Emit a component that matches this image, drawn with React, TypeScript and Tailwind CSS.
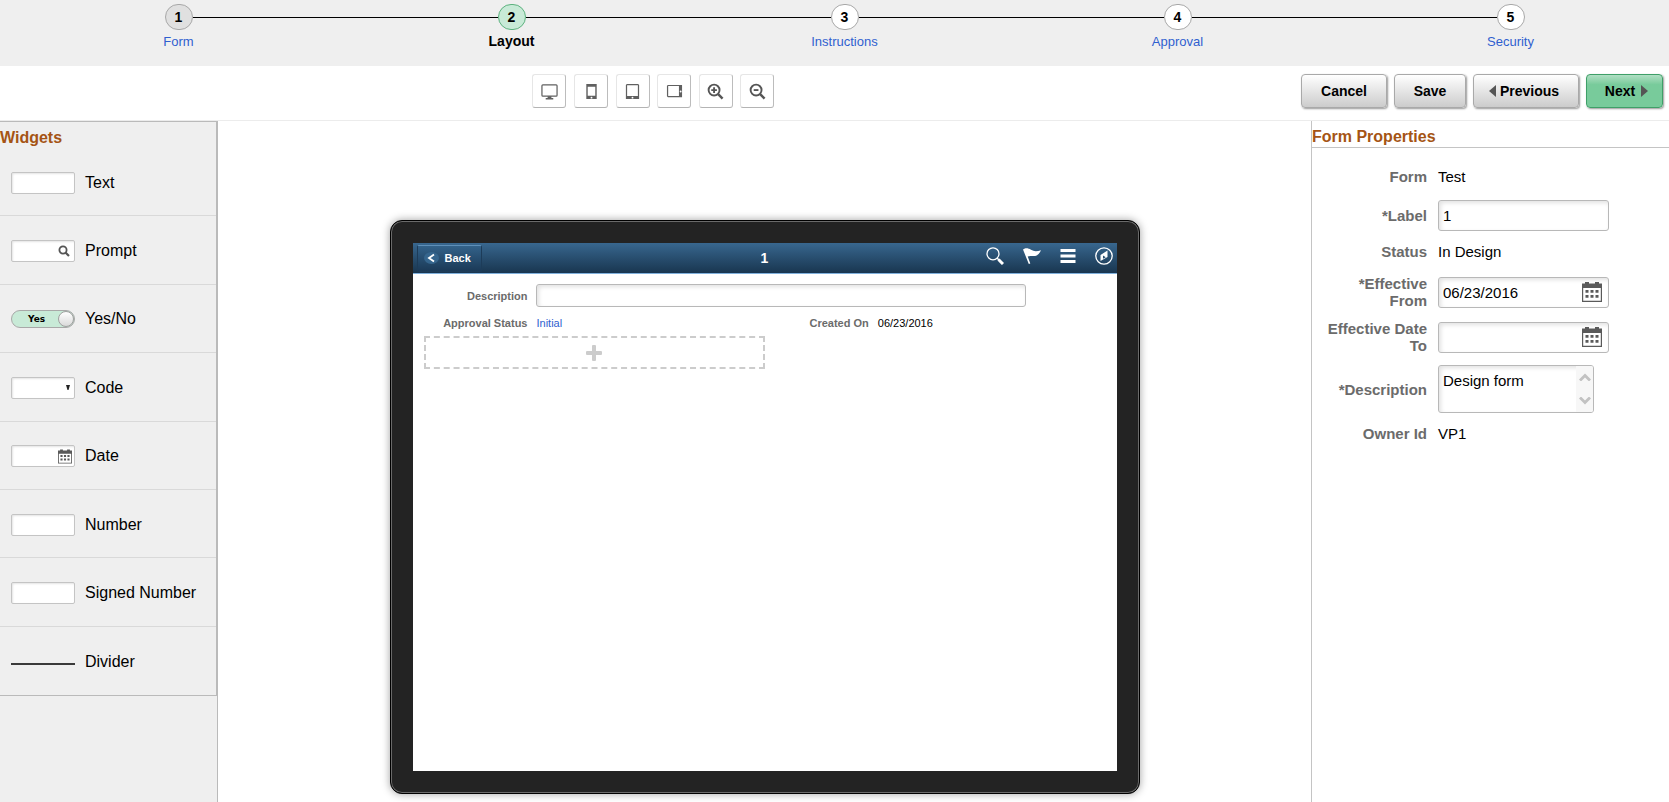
import { useState } from "react";
import type { ReactNode } from "react";

const STEPS = ["Form", "Layout", "Instructions", "Approval", "Security"];

const DEVICE_TOOLS: { label: string; icon: ReactNode }[] = [
  {
    label: "Desktop",
    icon: (
      <>
        <rect x="1" y="2" width="16" height="12" rx="1" fill="none" stroke="#606060" strokeWidth="1.3" />
        <path d="M7 14h4v2h2v1.5H5V16h2z" fill="#606060" />
      </>
    ),
  },
  {
    label: "Phone",
    icon: (
      <>
        <path d="M3.5 1h11v16h-11zM5 4v9.500h8V4z" fillRule="evenodd" fill="#606060" />
        <circle cx="9" cy="15.500" r="1" fill="#fff" />
      </>
    ),
  },
  {
    label: "Tablet portrait",
    icon: (
      <>
        <path d="M3 1h12l1 1v15H2V2zM3.300 2.300v11.500h11.400V2.300z" fillRule="evenodd" fill="#606060" />
        <circle cx="9" cy="15.500" r="1" fill="#fff" />
      </>
    ),
  },
  {
    label: "Tablet landscape",
    icon: (
      <>
        <path d="M1 3l1-1h15v13H2l-1-1zM2.300 3.300v10.400h11.400V3.300z" fillRule="evenodd" fill="#606060" />
        <circle cx="15.500" cy="9" r="1" fill="#fff" />
      </>
    ),
  },
  {
    label: "Zoom in",
    icon: (
      <g fill="none" stroke="#555" strokeWidth="2">
        <circle cx="7.500" cy="7.500" r="5.800" />
        <path d="M11.800 11.800l4.700 4.700" strokeWidth="2.600" />
        <path d="M7.500 4.500v6M4.500 7.500h6" />
      </g>
    ),
  },
  {
    label: "Zoom out",
    icon: (
      <g fill="none" stroke="#555" strokeWidth="2">
        <circle cx="7.500" cy="7.500" r="5.800" />
        <path d="M11.800 11.800l4.700 4.700" strokeWidth="2.600" />
        <path d="M5 7.500h5" />
      </g>
    ),
  },
];

function CalendarIcon({ className }: { className: string }) {
  return (
    <svg viewBox="0 0 20 20" className={className} aria-hidden="true">
      <path d="M0 1.500h3V0h4v1.500h6V0h4v1.500h3V20H0zM1.200 6v12.800h17.600V6z" fillRule="evenodd" fill="#5a5a5a" />
      <path
        d="M3.500 8h3v2.800h-3zM8.500 8h3v2.800h-3zM13.500 8h3v2.800h-3zM3.500 13h3v2.800h-3zM8.500 13h3v2.800h-3zM13.500 13h3v2.800h-3z"
        fill="#5a5a5a"
      />
    </svg>
  );
}

function FieldBox({ children }: { children?: ReactNode }) {
  return (
    <span className="flex h-[22px] w-16 items-center justify-end rounded-xs border border-[#c4c4c4] bg-white pr-1 shadow-[inset_1px_1px_2px_#e4e4e4]">
      {children}
    </span>
  );
}

const WIDGETS: { label: string; preview: ReactNode }[] = [
  { label: "Text", preview: <FieldBox /> },
  {
    label: "Prompt",
    preview: (
      <FieldBox>
        <svg viewBox="0 0 12 12" className="h-3 w-3" fill="none" stroke="#555" aria-hidden="true">
          <circle cx="5" cy="5" r="3.600" strokeWidth="1.800" />
          <path d="M7.500 7.500l3.500 3.500" strokeWidth="2.200" />
        </svg>
      </FieldBox>
    ),
  },
  {
    label: "Yes/No",
    preview: (
      <span className="flex h-[18px] w-16 items-center justify-between rounded-full border border-[#a8a8a8] bg-[#c8ead7] pl-4 font-['DejaVu_Sans','Liberation_Sans',sans-serif] text-[9px] font-bold">
        Yes
        <span className="h-4 w-4 rounded-full border border-[#a0a0a0] bg-linear-to-b from-white to-[#dadada]" />
      </span>
    ),
  },
  {
    label: "Code",
    preview: (
      <FieldBox>
        <svg viewBox="0 0 4 5" className="h-[5px] w-1" aria-hidden="true">
          <path d="M0 0h4L2.500 5h-1z" fill="#222" />
        </svg>
      </FieldBox>
    ),
  },
  {
    label: "Date",
    preview: (
      <FieldBox>
        <CalendarIcon className="-mr-0.5 h-[15px] w-[14px]" />
      </FieldBox>
    ),
  },
  { label: "Number", preview: <FieldBox /> },
  { label: "Signed Number", preview: <FieldBox /> },
  { label: "Divider", preview: <span className="mt-1 h-0.5 w-16 bg-[#3a3a3a]" /> },
];

const BUTTON = "flex h-[34px] items-center justify-center rounded-sm border text-sm font-bold text-black";
const GREY_BUTTON = `${BUTTON} border-[#a9a9a9] bg-linear-to-b from-white to-[#cccccc] shadow-[1px_1px_2px_#999]`;
const INPUT =
  "rounded-[3px] border border-[#b8b8b8] bg-white shadow-[inset_2px_2px_4px_#e2e2e2] outline-none focus:border-[#6a9fd0]";

function StepTrain() {
  return (
    <nav aria-label="Steps" className="h-[66px] overflow-hidden bg-[#efefef] pt-1">
      <ol className="-mr-2 ml-3 grid grid-cols-5">
        {STEPS.map((step, i) => {
          const current = i === 1;
          const circle = current
            ? "border-[#5db27f] bg-[#c8ead7]"
            : i === 0
              ? "border-[#a8a8a8] bg-[#e0e0e0]"
              : "border-[#a8a8a8] bg-white";
          return (
            <li key={step} className="flex flex-col items-center">
              <div className="flex w-full items-center">
                <span className={i === 0 ? "h-px flex-1" : "h-px flex-1 bg-black"} />
                <span
                  className={`flex h-[26px] w-7 items-center justify-center rounded-full border text-sm font-bold ${circle}`}
                >
                  {i + 1}
                </span>
                <span className={i === STEPS.length - 1 ? "h-px flex-1" : "h-px flex-1 bg-black"} />
              </div>
              {current ? (
                <span aria-current="step" className="mt-px text-sm font-bold">
                  {step}
                </span>
              ) : (
                <a href="#" className="mt-0.5 text-[13px] leading-5 text-[#2f5fcf]">
                  {step}
                </a>
              )}
            </li>
          );
        })}
      </ol>
    </nav>
  );
}

function Toolbar() {
  return (
    <div className="flex h-[55px] items-start justify-between border-b border-[#ececec] bg-white pt-2 pr-1.5 pl-[31.9%]">
      <div className="flex w-[242px] justify-between">
        {DEVICE_TOOLS.map((tool) => (
          <button
            key={tool.label}
            type="button"
            title={tool.label}
            aria-label={tool.label}
            className="flex h-[34px] w-[34px] items-center justify-center rounded-[3px] border border-t-[#e6e6e6] border-r-[#bcbcbc] border-b-[#b4b4b4] border-l-[#e6e6e6] bg-white"
          >
            <svg viewBox="0 0 18 18" className="h-[17px] w-[17px]" aria-hidden="true">
              {tool.icon}
            </svg>
          </button>
        ))}
      </div>
      <div className="flex gap-[7px]">
        <button type="button" className={`${GREY_BUTTON} w-[86px]`}>
          Cancel
        </button>
        <button type="button" className={`${GREY_BUTTON} w-[72px]`}>
          Save
        </button>
        <button type="button" className={`${GREY_BUTTON} w-[106px] gap-1 pr-1`}>
          <svg viewBox="0 0 7 12" className="h-3 w-[7px]" aria-hidden="true">
            <path d="M7 0v12L0 6z" fill="#555" />
          </svg>
          Previous
        </button>
        <button
          type="button"
          className={`${BUTTON} w-[77px] gap-1.5 border-[#3f9f68] pl-1 bg-linear-to-b from-[#b0dfc4] via-[#78cb9b] via-30% to-[#78cb9b] shadow-[1px_1px_2px_#999]`}
        >
          Next
          <svg viewBox="0 0 7 12" className="h-3 w-[7px]" aria-hidden="true">
            <path d="M0 0v12l7-6z" fill="#555" />
          </svg>
        </button>
      </div>
    </div>
  );
}

function WidgetPanel() {
  return (
    <aside className="w-[218px] shrink-0 border-r border-[#bababa] bg-[#efefef]">
      <div className="border-t border-r border-b border-[#bababa]">
        <h2 className="h-[26px] pt-1 text-base leading-6 font-bold text-[#a55414]">Widgets</h2>
        <ul className="grid h-[547px] grid-rows-8">
          {WIDGETS.map((w) => (
            <li
              key={w.label}
              className="flex items-center gap-2.5 border-b border-[#d9d9d9] pt-0.5 pl-[11px] text-base last:border-b-0"
            >
              {w.preview}
              {w.label}
            </li>
          ))}
        </ul>
      </div>
    </aside>
  );
}

function TabletPreview() {
  const [description, setDescription] = useState("");
  return (
    <main className="flex min-w-0 flex-1 justify-center pt-[99px]">
      <div className="h-[574px] w-[750px] shrink-0 rounded-xl border border-black bg-[#232323] p-[22px] shadow-[inset_0_0_0_1px_#6a6a6a,0_0_8px_#a0a0a0]">
        <div className="h-full bg-white text-[11px] leading-4">
          <div className="grid h-[31px] grid-cols-3 items-center border-b border-[#7fb0dc] bg-linear-to-b from-[#38678f] to-[#193650] text-white">
            <button
              type="button"
              className="ml-1 flex h-[27px] w-[65px] items-center gap-1.5 rounded-xs border border-[#1d3c59] border-t-[#5f8fb8] bg-linear-to-b from-[#33628a] to-[#1b3a57] pl-1.5 text-[11px] font-bold"
            >
              <svg viewBox="0 0 15 12" className="h-3 w-[15px]" aria-hidden="true">
                <ellipse cx="7.500" cy="6" rx="7.500" ry="6" fill="#35658d" />
                <path d="M10 2.500L5 6l5 3.500" fill="none" stroke="#fff" strokeWidth="1.800" />
              </svg>
              Back
            </button>
            <h1 className="text-center text-sm font-bold">1</h1>
            <div className="flex items-center justify-end gap-[19px] pr-1 pb-1">
              <button type="button" aria-label="Search">
                <svg viewBox="0 0 18 18" className="h-[18px] w-[18px]" fill="none" stroke="#fff" aria-hidden="true">
                  <circle cx="7" cy="6.800" r="6" strokeWidth="1.300" />
                  <path d="M11 11l2 2" strokeWidth="1.500" />
                  <path d="M12.500 12.500l4.500 4.500" strokeWidth="3" />
                </svg>
              </button>
              <button type="button" aria-label="Notifications">
                <svg viewBox="0 0 18 18" className="h-[18px] w-[18px]" aria-hidden="true">
                  <path
                    d="M0 2.500L1.800 1.400C4 1 6 1.400 8 2.800c3 1.800 6 1.600 10 .4-1.300 3-3 5.300-6 5.800-2.600.4-5.200-.8-7.300.6L7.300 16.500l-1.500.5z"
                    fill="#fff"
                  />
                </svg>
              </button>
              <button type="button" aria-label="Actions">
                <svg viewBox="0 0 16 16" className="h-4 w-4" aria-hidden="true">
                  <path d="M.5 1h15v3H.5zM.5 6.500h15v3H.5zM.5 12h15v3H.5z" fill="#fff" />
                </svg>
              </button>
              <button type="button" aria-label="Navigator">
                <svg viewBox="0 0 18 18" className="h-[18px] w-[18px]" aria-hidden="true">
                  <circle cx="9" cy="9" r="8.200" fill="none" stroke="#fff" strokeWidth="1.300" />
                  <path d="M12.500 3.500v6.500L5.500 14V8zM8 8.500v3.300l2.800-1.600z" fillRule="evenodd" fill="#fff" />
                </svg>
              </button>
            </div>
          </div>

          <div className="flex items-center gap-2 pt-2.5">
            <label htmlFor="preview-desc" className="w-[115px] text-right font-bold text-[#6b6b6b]">
              Description
            </label>
            <input
              id="preview-desc"
              value={description}
              onChange={(e) => setDescription(e.target.value)}
              className={`${INPUT} h-[23px] w-[490px] px-1`}
            />
          </div>
          <dl className="mt-2 flex items-center gap-[9px]">
            <dt className="w-[115px] text-right font-bold text-[#6b6b6b]">Approval Status</dt>
            <dd className="w-[264px]">
              <a href="#" className="text-[#2f5fcf]">
                Initial
              </a>
            </dd>
            <dt className="font-bold text-[#6b6b6b]">Created On</dt>
            <dd>06/23/2016</dd>
          </dl>
          <button
            type="button"
            aria-label="Add field"
            className="mt-[5px] ml-[11px] flex h-[33px] w-[341px] items-center justify-center border-2 border-dashed border-[#cccccc]"
          >
            <svg viewBox="0 0 16 16" className="h-4 w-4" aria-hidden="true">
              <path d="M6 1q0-1 1-1h2q1 0 1 1v5h5q1 0 1 1v2q0 1-1 1h-5v5q0 1-1 1H7q-1 0-1-1v-5H1q-1 0-1-1V7q0-1 1-1h5z" fill="#cccccc" />
            </svg>
          </button>
        </div>
      </div>
    </main>
  );
}

function PropertyRow({ label, htmlFor, required, children }: { label: string; htmlFor?: string; required?: boolean; children: ReactNode }) {
  if (!htmlFor) {
    return (
      <div className="flex h-[22px] items-center gap-[11px] pb-1">
        <span className="w-[103px] shrink-0 text-right font-bold text-[#6b6b6b]">{label}</span>
        {children}
      </div>
    );
  }
  return (
    <div className="flex items-center gap-[11px]">
      <label htmlFor={htmlFor} className="w-[103px] shrink-0 text-right font-bold text-[#6b6b6b]">
        {required && "*"}
        {label}
      </label>
      {children}
    </div>
  );
}

function DateField({ id, value, onChange }: { id: string; value: string; onChange: (v: string) => void }) {
  return (
    <div className={`${INPUT} flex h-[31px] w-[171px] items-center pr-1.5 pl-1`}>
      <input
        id={id}
        value={value}
        onChange={(e) => onChange(e.target.value)}
        className="min-w-0 flex-1 bg-transparent outline-none"
      />
      <button type="button" aria-label="Choose date">
        <CalendarIcon className="h-5 w-5" />
      </button>
    </div>
  );
}

function FormProperties() {
  const [label, setLabel] = useState("1");
  const [from, setFrom] = useState("06/23/2016");
  const [to, setTo] = useState("");
  const [description, setDescription] = useState("Design form");
  return (
    <aside className="w-[358px] shrink-0 border-l border-[#c4c4c4] bg-white">
      <h2 className="h-[27px] border-b border-[#c4c4c4] pt-1 text-base leading-6 font-bold text-[#a55414]">
        Form Properties
      </h2>
      <div className="flex flex-col gap-[11px] pt-[19px] pl-3 text-[15px] leading-[17px]">
        <PropertyRow label="Form">Test</PropertyRow>
        <PropertyRow label="Label" htmlFor="prop-label" required>
          <input
            id="prop-label"
            value={label}
            onChange={(e) => setLabel(e.target.value)}
            className={`${INPUT} h-[31px] w-[171px] px-1`}
          />
        </PropertyRow>
        <PropertyRow label="Status">In Design</PropertyRow>
        <PropertyRow label="Effective From" htmlFor="prop-from" required>
          <DateField id="prop-from" value={from} onChange={setFrom} />
        </PropertyRow>
        <PropertyRow label="Effective Date To" htmlFor="prop-to">
          <DateField id="prop-to" value={to} onChange={setTo} />
        </PropertyRow>
        <PropertyRow label="Description" htmlFor="prop-desc" required>
          <div className={`${INPUT} flex h-12 w-[156px] overflow-hidden`}>
            <textarea
              id="prop-desc"
              value={description}
              onChange={(e) => setDescription(e.target.value)}
              className="min-w-0 flex-1 resize-none overflow-hidden bg-transparent pt-1.5 pl-1 outline-none"
            />
            <div aria-hidden="true" className="flex w-[17px] flex-col items-center justify-between bg-[#f7f7f7] py-[7px]">
              <svg viewBox="0 0 12 8" className="h-2 w-3" fill="none" stroke="#c2c2c2" strokeWidth="2.800">
                <path d="M1 7.500l5-5 5 5" />
              </svg>
              <svg viewBox="0 0 12 8" className="h-2 w-3" fill="none" stroke="#c2c2c2" strokeWidth="2.800">
                <path d="M1 .5l5 5 5-5" />
              </svg>
            </div>
          </div>
        </PropertyRow>
        <PropertyRow label="Owner Id">VP1</PropertyRow>
      </div>
    </aside>
  );
}

export default function App() {
  return (
    <div className="flex min-h-screen flex-col bg-white font-['Liberation_Sans',Arial,sans-serif] text-black">
      <StepTrain />
      <Toolbar />
      <div className="flex flex-1">
        <WidgetPanel />
        <TabletPreview />
        <FormProperties />
      </div>
    </div>
  );
}
